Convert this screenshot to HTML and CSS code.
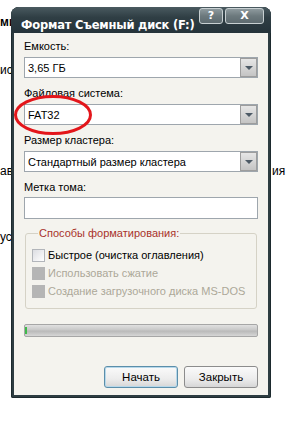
FILE: index.html
```html
<!DOCTYPE html>
<html lang="ru">
<head>
    <meta charset="UTF-8">
    <title>Формат Съемный диск (F:)</title>
    <link rel="stylesheet" href="styles.css">
</head>
<body>
    <div class="behind">
        <span class="bg-text t1">мин</span>
        <span class="bg-text t2">ис</span>
        <span class="bg-text t3">ав</span>
        <span class="bg-text t4">ия</span>
        <span class="bg-text t5">уст</span>
    </div>
    <div class="window">
        <div class="titlebar">
            <span class="title">Формат Съемный диск (F:)</span>
            <div class="caption-buttons">
                <span class="cap-btn help">?</span>
                <span class="cap-btn close">X</span>
            </div>
        </div>
        <div class="content">
            <div class="field">
                <label>Емкость:</label>
                <div class="select"><span>3,65 ГБ</span><i class="drop"></i></div>
            </div>
            <div class="field">
                <label>Файловая система:</label>
                <div class="select"><span>FAT32</span><i class="drop"></i></div>
            </div>
            <div class="field">
                <label>Размер кластера:</label>
                <div class="select"><span>Стандартный размер кластера</span><i class="drop"></i></div>
            </div>
            <div class="field">
                <label>Метка тома:</label>
                <div class="textbox"></div>
            </div>
            <fieldset class="group">
                <legend>Способы форматирования:</legend>
                <div class="check"><i class="box"></i>Быстрое (очистка оглавления)</div>
                <div class="check disabled"><i class="box"></i>Использовать сжатие</div>
                <div class="check disabled"><i class="box"></i>Создание загрузочного диска MS-DOS</div>
            </fieldset>
            <div class="progress"><i class="progress-start"></i></div>
            <div class="buttons">
                <span class="btn default">Начать</span>
                <span class="btn">Закрыть</span>
            </div>
        </div>
    </div>
    <svg class="mark" width="80" height="42" viewBox="0 0 80 42">
        <ellipse cx="40" cy="21" rx="37.5" ry="18.5" fill="none" stroke="#e3161b" stroke-width="3"/>
    </svg>
</body>
</html>
```

FILE: styles.css
```css
* {
    margin: 0;
    padding: 0;
    box-sizing: border-box;
}
body {
    background: #fff;
    font-family: "Liberation Sans", Arial, sans-serif;
    font-size: 11px;
    color: #000;
    padding: 7px 0 0 11px;
}
.behind .bg-text {
    position: absolute;
    font-size: 12px;
    color: #000;
}
.t1 { left: 0; top: 15px; font-weight: bold; }
.t2 { left: 0; top: 63px; }
.t3 { left: 0; top: 164px; }
.t4 { left: 272px; top: 164px; }
.t5 { left: 0; top: 230px; }

.window {
    position: relative;
    width: 260px;
    background: #2e3d42;
    border-radius: 8px 8px 2px 2px;
    padding: 0 3px 3px 3px;
    box-shadow: inset 0 0 0 1px #1d2a2e;
}
.titlebar {
    height: 26px;
    display: flex;
    align-items: flex-start;
    justify-content: space-between;
    background: linear-gradient(#4a5a60, #2f3e44 40%, #25333a);
    margin: 0 -3px;
    padding: 0 7px 0 10px;
    border-radius: 8px 8px 0 0;
}
.title {
    color: #fff;
    font-family: "DejaVu Sans", sans-serif;
    font-weight: bold;
    font-size: 11.5px;
    line-height: 14px;
    margin-top: 11px;
    letter-spacing: -0.2px;
}
.caption-buttons {
    display: flex;
    gap: 2px;
    margin-top: 1px;
}
.cap-btn {
    height: 16px;
    border: 1px solid #c8d0d2;
    border-radius: 3px;
    background: linear-gradient(#8e9a9e, #6c797d 50%, #5e6b70);
    color: #fff;
    font-family: "DejaVu Sans", sans-serif;
    font-weight: bold;
    font-size: 11px;
    line-height: 14px;
    text-align: center;
}
.help { width: 24px; }
.close { width: 39px; }

.content {
    background: #f4f3ee;
    padding: 6px 10px 7px 10px;
}
.field {
    display: flex;
    flex-direction: column;
    gap: 4px;
    margin-bottom: 8px;
}
.field label {
    line-height: 14px;
    color: #000;
}
.select, .textbox {
    height: 21px;
    background: #fff;
    border: 1px solid #9ea6ad;
    display: flex;
    align-items: center;
    justify-content: space-between;
}
.select span {
    padding-left: 3px;
}
.drop {
    width: 17px;
    height: 19px;
    background: linear-gradient(#e6e6e6, #c4c4c4);
    border: 1px solid #9d9d9d;
    position: relative;
}
.drop::after {
    content: "";
    position: absolute;
    left: 4px;
    top: 7px;
    border-left: 4px solid transparent;
    border-right: 4px solid transparent;
    border-top: 4px solid #4d5a66;
}
.textbox {
    height: 22px;
    margin-top: -1px;
}

.group {
    border: 1px solid #d5d2c6;
    border-radius: 3px;
    margin: 6px 1px 0 1px;
    padding: 6px 6px 9px 6px;
    height: 82px;
}
.group legend {
    color: #a8322a;
    padding: 0 1px;
    margin-left: 6px;
    line-height: 13px;
}
.check {
    display: flex;
    align-items: center;
    gap: 3px;
    height: 18px;
}
.box {
    width: 13px;
    height: 13px;
    border: 1px solid #b2b5ba;
    background: linear-gradient(135deg, #dcdde2, #fff);
}
.disabled {
    color: #aca899;
}
.disabled .box {
    background: #b5b5b5;
    border-color: #b5b5b5;
}

.progress {
    margin-top: 15px;
    height: 13px;
    border: 1px solid #a6a6a6;
    border-radius: 2px;
    background: linear-gradient(#e0e0e0, #c8c8c8 45%, #b9b9b9 55%, #d6d6d6);
    display: flex;
}
.progress-start {
    width: 2px;
    background: #3fb94a;
    margin: 2px 0;
}

.buttons {
    display: flex;
    justify-content: flex-end;
    gap: 6px;
    margin-top: 29px;
}
.btn {
    width: 74px;
    height: 22px;
    border: 1px solid #8c8c8c;
    border-radius: 3px;
    background: linear-gradient(#fafafa, #ececec 60%, #d6d6d6);
    text-align: center;
    line-height: 20px;
    font-size: 11.5px;
}
.btn.default {
    border-color: #5b8eaa;
    box-shadow: inset 0 0 0 1px #b7d8ea;
}
.mark {
    position: absolute;
    left: 13px;
    top: 94px;
}
```
